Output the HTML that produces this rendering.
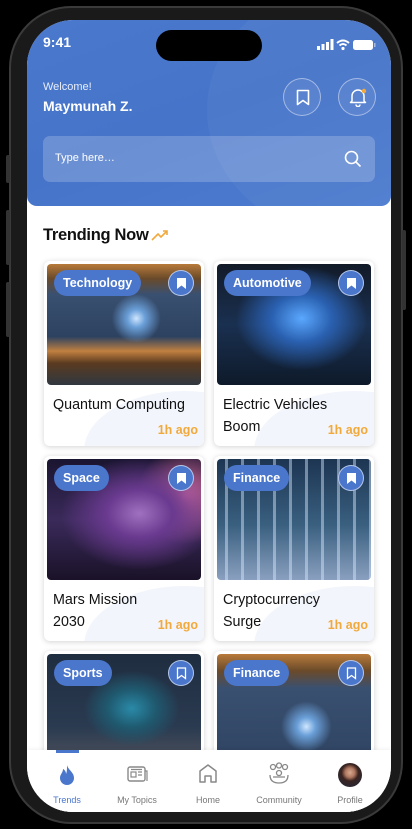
<!DOCTYPE html>
<html><head><meta charset="utf-8"><style>
*{margin:0;padding:0;box-sizing:border-box}
body{width:412px;height:829px;background:#000;font-family:"Liberation Sans",sans-serif;position:relative;overflow:hidden}
.frame{position:absolute;left:9px;top:6px;width:394px;height:818px;border-radius:62px;background:#1a1a1a;border:2px solid #3a3a3a}
.btn{position:absolute;left:6px;width:4px;background:#333;border-radius:2px}
.screen{position:absolute;left:27px;top:20px;width:364px;height:792px;border-radius:46px;overflow:hidden;background:#fff}
.hdr{position:absolute;left:0;top:0;width:364px;height:186px;background:linear-gradient(160deg,#4a78cc 0%,#4674c9 50%,#4d7bcf 100%);border-radius:0 0 10px 10px;overflow:hidden}
.hdr:after{content:"";position:absolute;left:180px;top:-40px;width:300px;height:260px;border-radius:50%;background:rgba(255,255,255,0.04)}
.island{position:absolute;left:129px;top:10px;width:106px;height:31px;background:#000;border-radius:16px}
.time{position:absolute;left:16px;top:14px;color:#fff;font-size:14px;font-weight:bold}
.wel{position:absolute;left:16px;top:61px;color:#e8eefa;font-size:11px}
.name{position:absolute;left:16px;top:78px;color:#fff;font-size:14px;font-weight:bold}
.cbtn{position:absolute;top:58px;width:38px;height:38px;border-radius:50%;border:1px solid rgba(255,255,255,0.45);background:rgba(255,255,255,0.07)}
.search{position:absolute;left:16px;top:116px;width:332px;height:46px;border-radius:7px;background:rgba(255,255,255,0.2)}
.search span{position:absolute;left:12px;top:16px;color:#fff;font-size:11px}
.tt{position:absolute;left:16px;top:206px;font-size:16.5px;font-weight:bold;color:#111;letter-spacing:-0.3px}
.card{position:absolute;width:160px;height:185px;background:#fff;border-radius:6px;box-shadow:0 1px 6px rgba(0,0,0,0.18);overflow:hidden}
.card:before{content:"";position:absolute;left:40px;top:130px;width:200px;height:120px;border-radius:50%;background:#f2f5fb}
.img{position:absolute;left:3px;top:3px;width:154px;height:121px;border-radius:4px}
.tag{position:absolute;left:10px;top:9px;height:26px;padding:0 9px;border-radius:13px;background:#4a76cc;color:#fff;font-size:12.5px;font-weight:bold;line-height:26px}
.bm{position:absolute;right:10px;top:9px;width:26px;height:26px;border-radius:50%;background:#4a76cc;border:1px solid rgba(255,255,255,.6)}
.bm svg{position:absolute;left:7px;top:6px}
.ct{position:absolute;left:9px;top:133px;font-size:14.3px;color:#111;line-height:22px;width:150px;white-space:nowrap}
.ago{position:absolute;right:6px;top:162px;font-size:12.5px;font-weight:bold;color:#f2a93b}
.nav{position:absolute;left:0;top:730px;width:364px;height:62px;background:#fff;box-shadow:0 -1px 4px rgba(0,0,0,0.06)}
.ni{position:absolute;top:45px;font-size:9px;color:#777;text-align:center;width:70px}
.ic{position:absolute;top:14px}
</style></head><body>
<div class="frame"></div>
<div class="btn" style="top:155px;height:28px"></div>
<div class="btn" style="top:210px;height:55px"></div>
<div class="btn" style="top:282px;height:55px"></div>
<div class="btn" style="left:402px;top:230px;height:80px"></div>
<div class="screen">
 <div class="hdr"></div>
 <div class="island"></div>
 <div class="time">9:41</div>
 <svg style="position:absolute;left:290px;top:19px" width="60" height="12">
  <rect x="0" y="7" width="3" height="4" fill="#fff"/><rect x="4.5" y="5" width="3" height="6" fill="#fff"/><rect x="9" y="3" width="3" height="8" fill="#fff"/><rect x="13.5" y="0" width="3" height="11" fill="#fff"/>
  <path d="M20 4 Q26 -1 32 4 M22.5 6.5 Q26 3.5 29.5 6.5" stroke="#fff" stroke-width="2" fill="none"/><circle cx="26" cy="9.5" r="1.6" fill="#fff"/>
  <rect x="36" y="1" width="20" height="10" rx="2.5" fill="#fff"/><rect x="57" y="4" width="1.5" height="4" fill="#fff" opacity=".5"/>
 </svg>
 <div class="wel">Welcome!</div>
 <div class="name">Maymunah Z.</div>
 <div class="cbtn" style="left:256px"><svg style="position:absolute;left:12px;top:10px" width="14" height="17"><path d="M1.5 1.5h11v14l-5.5-4-5.5 4z" stroke="#fff" stroke-width="1.6" fill="none" stroke-linejoin="round"/></svg></div>
 <div class="cbtn" style="left:311px"><svg style="position:absolute;left:10px;top:9px" width="18" height="19"><path d="M3 13V8a6 6 0 0 1 12 0v5l1.5 1.5h-15z" stroke="#fff" stroke-width="1.5" fill="none" stroke-linejoin="round"/><path d="M7 16.5a2 2 0 0 0 4 0" stroke="#fff" stroke-width="1.5" fill="none"/><circle cx="15" cy="3" r="2.2" fill="#f2a93b"/></svg></div>
 <div class="search"><span>Type here…</span><svg style="position:absolute;left:301px;top:14px" width="18" height="18"><circle cx="7.5" cy="7.5" r="6" stroke="#fff" stroke-width="1.6" fill="none"/><path d="M12 12l4.5 4.5" stroke="#fff" stroke-width="1.6"/></svg></div>
 <div class="tt">Trending Now</div>
 <svg style="position:absolute;left:124px;top:209px" width="18" height="12"><path d="M1 11l6-6 3 3 6-6M12 2h4v4" stroke="#f2a93b" stroke-width="1.6" fill="none"/></svg>

 <div class="card" style="left:17px;top:241px"><div class="img" style="background:radial-gradient(circle at 58% 45%,#cfe6ff 0,#6a9fd8 8%,transparent 22%),linear-gradient(180deg,#b87a3a 0%,#6a4a2a 12%,#3a5070 25%,#2d4260 60%,#c08040 72%,#5a3a20 82%,#303840 100%)"></div><div class="tag">Technology</div><div class="bm"><svg width="11" height="13"><path d="M1 1h9v11l-4.5-3.5L1 12z" fill="#fff"/></svg></div><div class="ct">Quantum Computing</div><div class="ago">1h ago</div></div>
 <div class="card" style="left:187px;top:241px"><div class="img" style="background:radial-gradient(ellipse at 55% 45%,#5aa8ff 0,#2a60b0 25%,transparent 55%),linear-gradient(180deg,#121a28 0%,#1a3050 50%,#0e1a2a 100%)"></div><div class="tag">Automotive</div><div class="bm"><svg width="11" height="13"><path d="M1 1h9v11l-4.5-3.5L1 12z" fill="#fff"/></svg></div><div class="ct">Electric Vehicles<br>Boom</div><div class="ago">1h ago</div></div>
 <div class="card" style="left:17px;top:436px"><div class="img" style="background:radial-gradient(ellipse at 60% 45%,#a070c0 0,#6a3a90 25%,transparent 60%),radial-gradient(circle at 90% 30%,#e070a0 0,transparent 30%),linear-gradient(180deg,#1a1530 0%,#3a2a5a 50%,#1a1228 100%)"></div><div class="tag">Space</div><div class="bm"><svg width="11" height="13"><path d="M1 1h9v11l-4.5-3.5L1 12z" fill="#fff"/></svg></div><div class="ct">Mars Mission<br>2030</div><div class="ago">1h ago</div></div>
 <div class="card" style="left:187px;top:436px"><div class="img" style="background:repeating-linear-gradient(90deg,transparent 0 8px,rgba(220,235,255,.45) 8px 11px,transparent 11px 16px),linear-gradient(180deg,#1c3552 0%,#3a6080 55%,#8aa0c0 100%)"></div><div class="tag">Finance</div><div class="bm"><svg width="11" height="13"><path d="M1 1h9v11l-4.5-3.5L1 12z" fill="#fff"/></svg></div><div class="ct">Cryptocurrency<br>Surge</div><div class="ago">1h ago</div></div>
 <div class="card" style="left:17px;top:631px"><div class="img" style="background:radial-gradient(ellipse at 55% 45%,#2a8aa8 0,#1f5a70 20%,transparent 40%),linear-gradient(180deg,#1f2d40 0%,#2a3a50 60%,#5a5a60 100%)"></div><div class="tag">Sports</div><div class="bm"><svg width="11" height="13"><path d="M1.5 1h8v10.5l-4-3-4 3z" stroke="#fff" stroke-width="1.3" fill="none"/></svg></div></div>
 <div class="card" style="left:187px;top:631px"><div class="img" style="background:radial-gradient(circle at 58% 60%,#cfe6ff 0,#6a9fd8 8%,transparent 22%),linear-gradient(180deg,#b87a3a 0%,#6a4a2a 14%,#3a5070 28%,#2d4260 100%)"></div><div class="tag">Finance</div><div class="bm"><svg width="11" height="13"><path d="M1.5 1h8v10.5l-4-3-4 3z" stroke="#fff" stroke-width="1.3" fill="none"/></svg></div></div>

 <div class="nav">
  <div style="position:absolute;left:29px;top:0;width:23px;height:3px;background:#4a76cc"></div>
  <svg class="ic" style="left:31px" width="18" height="22"><path d="M9 1C10 6 16 8 16 14a7 7 0 0 1-14 0c0-4 3-5 3-9 2 1 3 3 3 5 1-2 1-5 1-9z" fill="#4a76cc"/></svg>
  <div class="ni" style="left:5px;color:#4a76cc">Trends</div>
  <svg class="ic" style="left:100px;top:15px" width="21" height="18"><rect x="1" y="2" width="17" height="14" rx="2" stroke="#888" stroke-width="1.4" fill="none"/><rect x="4" y="7" width="5" height="5" stroke="#888" stroke-width="1.2" fill="none"/><path d="M11 7h4M11 10h4M4 4.5h11M18 6h2v10" stroke="#888" stroke-width="1.2" fill="none"/></svg>
  <div class="ni" style="left:75px">My Topics</div>
  <svg class="ic" style="left:171px;top:13px" width="20" height="21"><path d="M2 19V8l8-6 8 6v11h-5v-6h-6v6z" stroke="#888" stroke-width="1.5" fill="none" stroke-linejoin="round"/></svg>
  <div class="ni" style="left:146px">Home</div>
  <svg class="ic" style="left:241px;top:12px" width="22" height="22"><circle cx="5" cy="5" r="2.5" stroke="#888" stroke-width="1.3" fill="none"/><circle cx="11" cy="3.5" r="2.5" stroke="#888" stroke-width="1.3" fill="none"/><circle cx="17" cy="5" r="2.5" stroke="#888" stroke-width="1.3" fill="none"/><circle cx="11" cy="11" r="2.5" stroke="#888" stroke-width="1.3" fill="none"/><path d="M2 13q0 8 9 8t9-8M5 15h12" stroke="#888" stroke-width="1.3" fill="none"/></svg>
  <div class="ni" style="left:217px">Community</div>
  <div style="position:absolute;left:311px;top:13px;width:24px;height:24px;border-radius:50%;background:radial-gradient(circle at 50% 40%,#d8a890 0,#b07860 25%,#3a2420 45%,#1e2a40 100%)"></div>
  <div class="ni" style="left:288px">Profile</div>
 </div>
</div>
</body></html>
